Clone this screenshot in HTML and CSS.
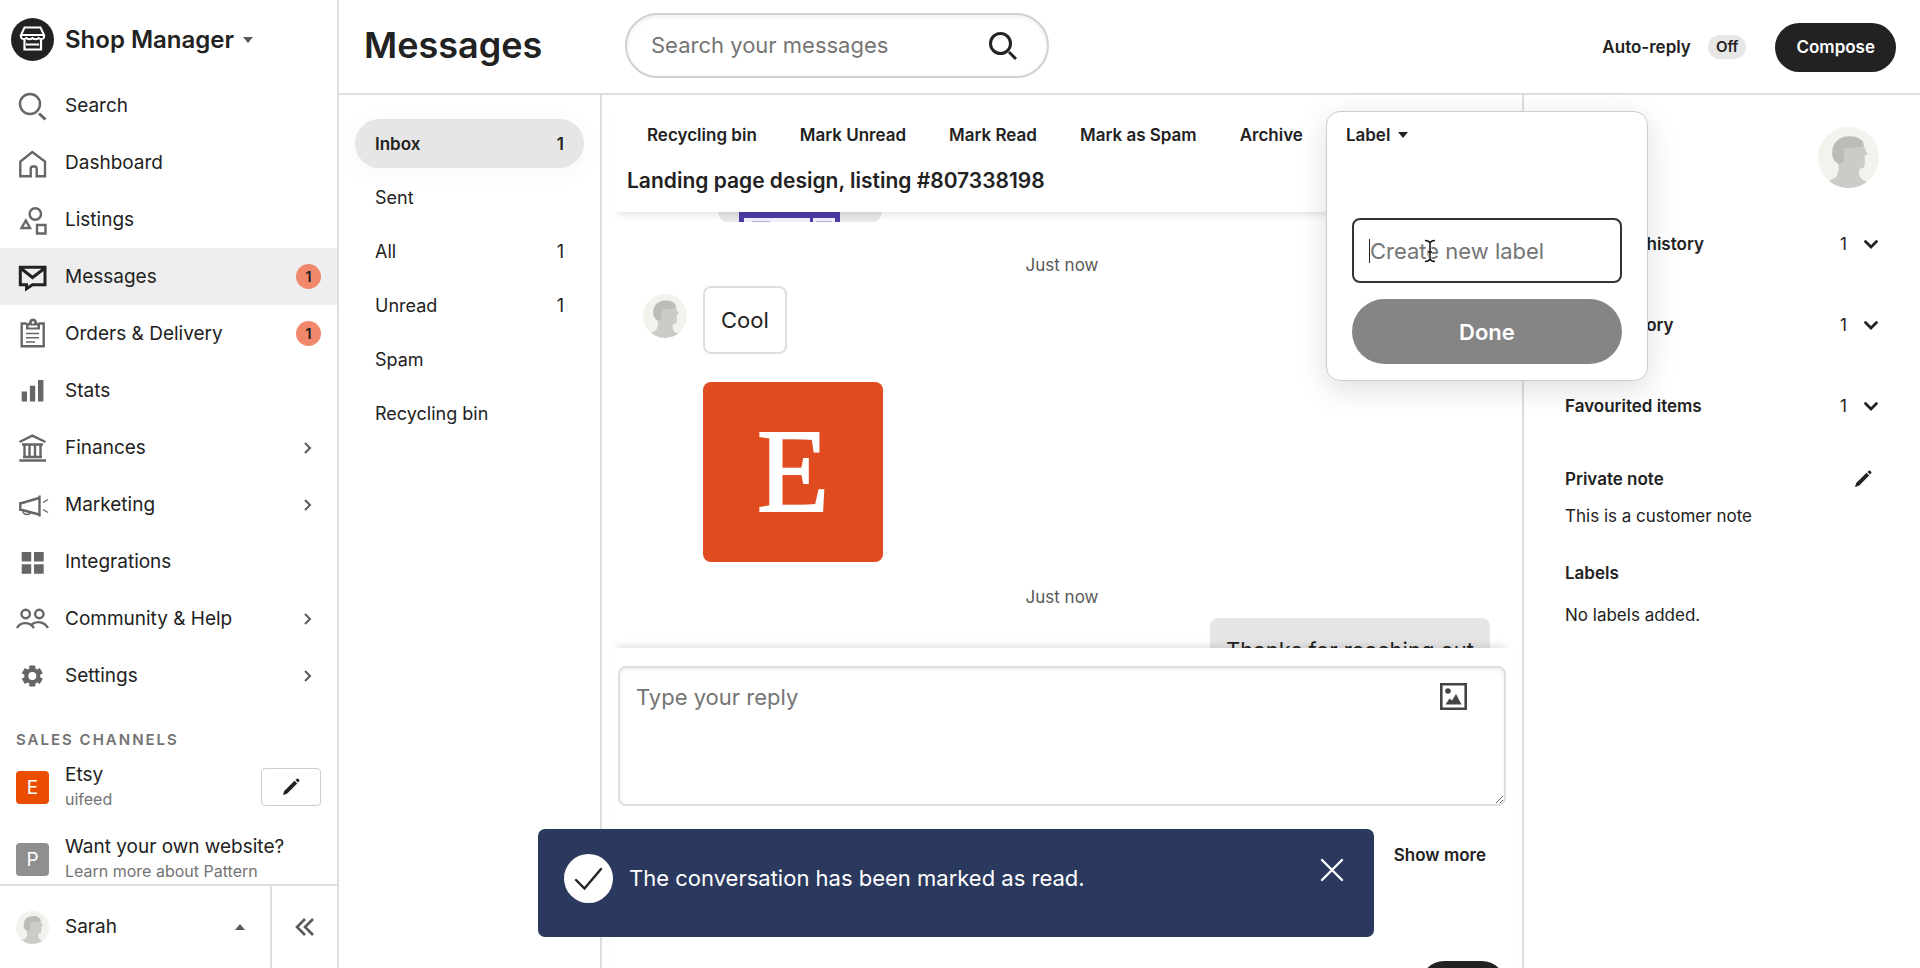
FILE: index.html
```html
<!DOCTYPE html>
<html lang="en">
<head>
<meta charset="utf-8">
<title>Shop Manager - Messages</title>
<link rel="stylesheet" href="styles.css">
</head>
<body>
<svg class="defs" aria-hidden="true">
  <symbol id="chev-right" viewBox="0 0 12 12"><path d="M3 1l5 5-5 5" fill="none" stroke="currentColor" stroke-width="2"/></symbol>
  <symbol id="chev-down" viewBox="0 0 16 16"><path d="M2.500 5.500L8 11l5.500-5.500" fill="none" stroke="currentColor" stroke-width="2.800" stroke-linecap="round"/></symbol>
  <symbol id="pencil" viewBox="0 0 18 18"><path d="M1 17l1.200-4L12.500 2.800l2.700 2.700L5 15.800zM13.500 1.900L14.800.700q.700-.500 1.400.100l1 1q.600.700 0 1.400L16 4.500z" fill="currentColor"/></symbol>
  <symbol id="avatar" viewBox="0 0 60 60">
    <circle cx="30" cy="30" r="30" fill="#f2f3ec"/>
    <path d="M20 38c1 6-1 10-3 12-2 1-4 2-6 3a30 30 0 0 0 37 1c-2-1-5-2-6-4-2-2-2-6-1-9 3 0 5-1 5-5v-8l3-1-3-6-2-8H22l-4 10z" fill="#cbccc7"/>
    <path d="M14 25c0-9 6-16 17-16 8 0 14 3 13 10l-6 1-12 1-1 13c-2 2-5 3-7 1-3-3-4-5-4-10z" fill="#bbbcb7"/>
  </symbol>
</svg>
<div class="app">
  <aside class="sidebar">
    <div class="side-scroll">
      <button class="brand" type="button">
        <svg class="brand-logo" viewBox="0 0 43 43"><circle cx="21.500" cy="21.500" r="21.500" fill="#222"/><path d="M13.500 9.500h16l3.500 7.500h-23z" fill="none" stroke="#fff" stroke-width="2"/><path d="M10 17v2.500q2 3 5.500.500q3 2.500 6 0q3 2.500 6 0q3.500 2.500 5.500-.500V17" fill="none" stroke="#fff" stroke-width="2"/><path d="M13.500 22v9.500h16.500V22M15 26.500h13" fill="none" stroke="#fff" stroke-width="2.200"/></svg>
        <span>Shop Manager</span><span class="tri-down grey"></span>
      </button>
      <nav class="nav">
        <a href="#"><svg viewBox="0 0 36 36"><circle cx="16" cy="16" r="10"/><path d="M25 25.500l6.500 6" stroke-width="3"/></svg><span>Search</span></a>
        <a href="#"><svg viewBox="0 0 36 36"><path d="M6.300 31.300V16.500l12-9.500 12.700 9.500v14.800h-8.300V24q0-2.500-2-2.500h-2q-2 0-2 2.500v7.300z"/></svg><span>Dashboard</span></a>
        <a href="#"><svg viewBox="0 0 36 36"><circle cx="21.300" cy="12" r="5.700"/><path d="M23 23h8.500v8.500H23zM11.800 18.500L7.500 26h8.500z"/></svg><span>Listings</span></a>
        <a href="#" class="active"><svg viewBox="0 0 36 36"><path d="M6.300 8.300H31v17.500H18.500l-6 4v-4H6.300zM6.500 9l12 9.500L31 9"/></svg><span>Messages</span><b class="badge">1</b></a>
        <a href="#"><svg viewBox="0 0 36 36"><path d="M12.500 7.500H7.700v22.700h22V7.500H25"/><path class="fill" fill-rule="evenodd" d="M12 13.500V7.500l3-1q.500-4 4-4t4 4l3 1v6zM19 5.200a1.300 1.300 0 1 0 0 2.600 1.300 1.300 0 0 0 0-2.600zM14.500 11.500h9v-2h-9z"/><path class="thin" d="M12 17.500h13M12 21.700h13M12 26h9"/></svg><span>Orders &amp; Delivery</span><b class="badge">1</b></a>
        <a href="#"><svg viewBox="0 0 36 36"><path class="fill" d="M7.700 18.500H13v10H7.700zM15.900 12.800h5.300v15.700h-5.300zM24 7h5.400v21.500H24z"/></svg><span>Stats</span></a>
        <a href="#"><svg viewBox="0 0 36 36"><path d="M5.500 12l12.800-6.300L31.500 12M8 14.500h21M9 27h19M5.300 30.500h26.700M10.500 14.500V27M15.500 14.500V27M21 14.500V27M26.500 14.500V27"/></svg><span>Finances</span><svg class="chev"><use href="#chev-right"/></svg></a>
        <a href="#"><svg viewBox="0 0 36 36"><path d="M25.500 8.500v21M25 11L6.300 16.500v6L25 27.500M6.300 15v9"/><path class="thin" d="M9 23.500q0 4 4 4 3 0 4-2.500M29 15.500l5-3M29 22.500l5 3"/></svg><span>Marketing</span><svg class="chev"><use href="#chev-right"/></svg></a>
        <a href="#"><svg viewBox="0 0 36 36"><path class="fill" d="M7.700 8h9.500v9.500H7.700zM20 8h9.700v9.500H20zM7.700 20.200h9.500v9.500H7.700zM20 20.200h9.700v9.500H20z"/></svg><span>Integrations</span></a>
        <a href="#"><svg viewBox="0 0 36 36"><circle cx="11.700" cy="13" r="4.200"/><circle cx="25.300" cy="13" r="4.200"/><path d="M3 27c3-6 12-7 17 0M17.500 23.500c5-4 13-3 16.500 3.500"/></svg><span>Community &amp; Help</span><svg class="chev"><use href="#chev-right"/></svg></a>
        <a href="#"><svg viewBox="0 0 36 36"><circle class="gear-ring" cx="18.300" cy="18" r="6"/><path class="gear-teeth" d="M18.300 7.500v4M18.300 24.500v4M9.300 12.700l3.400 2M23.900 21.300l3.400 2M9.300 23.300l3.400-2M23.900 14.700l3.400-2"/></svg><span>Settings</span><svg class="chev"><use href="#chev-right"/></svg></a>
      </nav>
      <h2 class="channels-title">Sales channels</h2>
      <div class="channel"><span class="tile etsy">E</span><div class="channel-text"><a href="#">Etsy</a><small>uifeed</small></div><button class="edit" type="button" aria-label="Edit shop"><svg><use href="#pencil"/></svg></button></div>
      <div class="channel"><span class="tile pattern">P</span><div class="channel-text"><a href="#">Want your own website?</a><small>Learn more about Pattern</small></div></div>
    </div>
    <div class="side-foot">
      <button class="user" type="button"><svg class="avatar-s"><use href="#avatar"/></svg><span>Sarah</span><span class="tri-up"></span></button>
      <button class="collapse" type="button" aria-label="Collapse"><svg viewBox="0 0 20 18"><path d="M10 1L2 9l8 8M18 1l-8 8 8 8" fill="none" stroke="#595959" stroke-width="2.600"/></svg></button>
    </div>
  </aside>
  <main class="main">
    <header class="top">
      <h1>Messages</h1>
      <label class="search"><input type="text" placeholder="Search your messages" aria-label="Search your messages"><svg viewBox="0 0 28 28"><circle cx="11.500" cy="11.500" r="10"/><path d="M20 20l7 7"/></svg></label>
      <div class="top-right"><span class="auto">Auto-reply</span><span class="off">Off</span><button class="compose" type="button">Compose</button></div>
    </header>
    <div class="body">
      <nav class="folders">
        <a href="#" class="current"><span>Inbox</span><span>1</span></a>
        <a href="#"><span>Sent</span></a>
        <a href="#"><span>All</span><span>1</span></a>
        <a href="#"><span>Unread</span><span>1</span></a>
        <a href="#"><span>Spam</span></a>
        <a href="#"><span>Recycling bin</span></a>
      </nav>
      <section class="conv">
        <div class="conv-head">
          <div class="tools">
            <button type="button">Recycling bin</button><button type="button">Mark Unread</button><button type="button">Mark Read</button><button type="button">Mark as Spam</button><button type="button">Archive</button>
            <div class="label-menu">
              <button type="button" class="label-btn">Label <span class="tri-down"></span></button>
              <form class="popup">
                <div class="field"><input type="text" placeholder="Create new label" aria-label="Create new label"><span class="caret"></span>
                <svg class="ibeam" viewBox="0 0 12 24"><path d="M1 1.500q4 0 5 2.500 1-2.500 5-2.500M6 4v16M1 22.500q4 0 5-2.500 1 2.500 5 2.500M4 13h4" fill="none" stroke="#fff" stroke-width="3"/><path d="M1 1.500q4 0 5 2.500 1-2.500 5-2.500M6 4v16M1 22.500q4 0 5-2.500 1 2.500 5 2.500M4 13h4" fill="none" stroke="#111" stroke-width="1.500"/></svg></div>
                <button type="button" class="done">Done</button>
              </form>
            </div>
          </div>
          <h2>Landing page design, listing #807338198</h2>
        </div>
        <div class="thread">
          <div class="clip"><svg viewBox="0 0 164 10"><path d="M0 0h164q-1 10-11 10H11Q1 10 0 0z" fill="#e8e8e8"/><path d="M21 0h101v10H21z" fill="#4f3ba6"/><path d="M26 6h66v4H26zM95 6h22v4H95z" fill="#f1effb"/><path d="M34 9h18v1H34zM98 9h16v1H98z" fill="#b5abdc"/></svg></div>
          <p class="time">Just now</p>
          <div class="incoming"><svg class="avatar-m"><use href="#avatar"/></svg><div class="bubble">Cool</div></div>
          <div class="picture">E</div>
          <p class="time">Just now</p>
          <div class="reply">Thanks for reaching out</div>
        </div>
        <div class="composer">
          <div class="box"><textarea placeholder="Type your reply" aria-label="Type your reply"></textarea><button type="button" class="attach" aria-label="Attach image"><svg viewBox="0 0 27 27"><path d="M1.300 1.300h24.400v24.400H1.300z" fill="none" stroke="#444" stroke-width="2.600"/><circle cx="8" cy="8" r="2.800" fill="#444"/><path d="M5.500 21.500l4-6 2.500 2 4-6.500 5.500 10.500z" fill="#444"/></svg></button></div>
          <button type="button" class="more">Show more</button>
          <button type="button" class="send" aria-label="Send"></button>
        </div>
      </section>
      <aside class="info">
        <svg class="avatar-l"><use href="#avatar"/></svg>
        <button type="button" class="fold"><b>Purchase history</b><span>1</span><svg><use href="#chev-down"/></svg></button>
        <button type="button" class="fold"><b>Order history</b><span>1</span><svg><use href="#chev-down"/></svg></button>
        <button type="button" class="fold"><b>Favourited items</b><span>1</span><svg><use href="#chev-down"/></svg></button>
        <div class="note-head"><h3>Private note</h3><button type="button" aria-label="Edit note"><svg><use href="#pencil"/></svg></button></div>
        <p class="note">This is a customer note</p>
        <h3>Labels</h3>
        <p class="labels">No labels added.</p>
      </aside>
    </div>
  </main>
  <div class="toast" role="status">
    <svg class="tick" viewBox="0 0 49 49"><circle cx="24.500" cy="24.500" r="24.500" fill="#fff"/><path d="M12 26l8.500 8.500L37 15" fill="none" stroke="#222" stroke-width="2.400" stroke-linecap="round"/></svg>
    <span>The conversation has been marked as read.</span>
    <button type="button" aria-label="Close"><svg viewBox="0 0 24 24"><path d="M2 2l20 20M22 2L2 22" fill="none" stroke="#fff" stroke-width="2.400" stroke-linecap="round"/></svg></button>
  </div>
</div>
</body>
</html>
```
FILE: styles.css
```css
* { box-sizing: border-box; }
body { margin: 0; font-family: Inter, "Liberation Sans", sans-serif; font-size: 19px; line-height: 24px; color: #222; background: #fff; }
button, input, textarea { font: inherit; color: inherit; }
button { border: 0; padding: 0; background: none; }
a { color: inherit; text-decoration: none; }
h1, h2, h3, p { margin: 0; }
.defs { display: none; }
.app { display: flex; height: 100vh; overflow: hidden; }

.sidebar { flex: 0 0 339px; display: flex; flex-direction: column; border-right: 2px solid #dedede; }
.side-scroll { flex: 1; min-height: 0; overflow: hidden; }
.brand { display: flex; align-items: center; height: 77px; padding: 2px 0 0 11px; font-size: 24px; font-weight: 600; }
.brand-logo { width: 43px; height: 43px; margin-right: 11px; }
.tri-down { display: inline-block; border: 5px solid transparent; border-top: 6px solid currentColor; border-bottom: 0; }
.tri-down.grey { margin-left: 9px; color: #595959; }
.nav a { display: flex; align-items: center; height: 57px; padding: 0 16px 0 14px; }
.nav svg { width: 36px; height: 36px; fill: none; stroke: #666; stroke-width: 2.4; }
.nav .thin { stroke-width: 1.4; }
.nav .fill { fill: #666; stroke: none; }
.nav .gear-ring { stroke-width: 4; }
.nav .gear-teeth { stroke-width: 6; }
.nav span { flex: 1; margin-left: 15px; }
.nav .active { background: #eee; }
.nav .active svg { stroke: #222; stroke-width: 3; }
.nav .chev { width: 12px; height: 12px; margin-right: 7px; color: #595959; }
.badge { width: 25px; height: 25px; border-radius: 50%; background: #f1886b; font-size: 15px; font-weight: 600; line-height: 25px; text-align: center; }
.channels-title { padding: 24px 16px 11px; font-size: 15px; font-weight: 600; letter-spacing: 2px; color: #737373; text-transform: uppercase; }
.channel { display: flex; align-items: center; padding: 0 16px; height: 48px; margin-bottom: 24px; }
.tile { width: 33px; height: 33px; border-radius: 4px; color: #fff; text-align: center; line-height: 33px; }
.etsy { background: #eb4d00; }
.pattern { background: #8f8f8f; }
.channel-text { flex: 1; display: grid; margin-left: 16px; }
.channel small { font-size: 16px; color: #737373; }
.edit { width: 60px; height: 38px; border: 1px solid #ccc; border-radius: 4px; display: grid; place-items: center; }
.edit svg, .note-head svg { width: 18px; height: 18px; }
.side-foot { flex: 0 0 84px; display: flex; border-top: 2px solid #dedede; }
.user { flex: 1; display: flex; align-items: center; padding: 0 25px 0 16px; text-align: left; }
.user span:nth-child(2) { flex: 1; margin-left: 16px; }
.avatar-s { width: 33px; height: 33px; }
.tri-up { border: 5px solid transparent; border-bottom: 6px solid #595959; border-top: 0; }
.collapse { width: 67px; border-left: 2px solid #dedede; display: grid; place-items: center; }
.collapse svg { width: 20px; height: 18px; }

.main { flex: 1; min-width: 0; display: flex; flex-direction: column; }
.top { flex: 0 0 95px; display: flex; align-items: center; padding: 0 24px 3px 25px; border-bottom: 2px solid #dedede; }
.top h1 { width: 261px; font-size: 36px; line-height: 44px; font-weight: 600; }
.search { position: relative; width: 424px; }
.search input { width: 100%; height: 65px; padding: 0 24px; border: 2px solid #d0d0d0; border-radius: 33px; box-shadow: inset 0 2px 4px #0001; font-size: 22px; outline: 0; }
::placeholder { color: #757575; opacity: 1; }
.search svg { position: absolute; right: 32px; top: 19px; width: 28px; height: 28px; fill: none; stroke: #222; stroke-width: 3; }
.top-right { margin-left: auto; display: flex; align-items: center; padding-top: 4px; font-size: 17px; font-weight: 600; }
.off { margin: 0 29px 0 17px; padding: 0 8px; border-radius: 12px; background: #e6e6e6; font-size: 15px; }
.compose { height: 49px; padding: 0 21px; border-radius: 25px; background: #222; color: #fff; }
.body { flex: 1; min-height: 0; display: flex; }

.folders { flex: 0 0 263px; padding: 24px 16px 0; border-right: 2px solid #dedede; font-size: 18px; }
.folders a { display: flex; justify-content: space-between; align-items: center; height: 49px; margin-bottom: 5px; padding: 0 20px; border-radius: 25px; }
.folders .current { background: #e6e6e6; font-size: 17px; font-weight: 600; box-shadow: 0 4px 24px #0000000a; }

.conv { flex: 1; min-width: 0; border-right: 2px solid #dedede; }
.conv-head { position: relative; z-index: 1; height: 117px; margin: 0 10px; padding: 0 15px; background: #fff; box-shadow: 0 8px 8px -6px #0002; }
.tools { display: flex; gap: 43px; padding: 28px 0 20px 20px; font-size: 17px; font-weight: 600; }
.tools button { white-space: nowrap; }
.conv-head h2 { font-size: 21px; font-weight: 600; line-height: 28px; }
.label-menu { position: relative; }
.label-btn { position: relative; z-index: 2; display: flex; align-items: center; gap: 8px; }
.popup { position: absolute; z-index: 1; top: -12px; left: -20px; width: 322px; height: 270px; padding: 106px 25px 18px; border: 1px solid #ccc; border-radius: 14px; background: #fff; box-shadow: 0 8px 30px #0002; }
.field { position: relative; }
.popup input { width: 100%; height: 65px; padding: 0 16px; border: 2px solid #333; border-radius: 8px; font-size: 22px; font-weight: 400; outline: 0; }
.caret { position: absolute; left: 17px; top: 21px; width: 1px; height: 24px; background: #222; }
.ibeam { position: absolute; left: 72px; top: 21px; width: 12px; height: 24px; }
.done { width: 100%; height: 65px; margin-top: 16px; border-radius: 33px; background: #858585; color: #fff; font-size: 22px; }

.thread { height: 45vh; overflow: hidden; padding: 0 32px; }
.clip svg { display: block; width: 164px; height: 10px; margin-left: 84px; }
.time { padding: 31px 0 9px; text-align: center; font-size: 17px; color: #595959; }
.incoming { display: flex; gap: 16px; margin-left: 9px; }
.avatar-m { width: 44px; height: 44px; margin-top: 8px; }
.bubble { padding: 20px 16px; border: 2px solid #dedede; border-radius: 8px; font-size: 22px; }
.picture { width: 180px; height: 180px; margin: 28px 0 -8px 69px; border-radius: 8px; background: #e04b20; color: #fff; font: 118px/180px "Liberation Serif", serif; -webkit-text-stroke: 2px #fff; text-align: center; }
.reply { width: max-content; margin-left: auto; padding: 20px 16px; border-radius: 8px; background: #e6e6e6; font-size: 22px; }
.composer { position: relative; display: flex; flex-direction: column; align-items: flex-end; margin: 0 10px; padding: 18px 6px 0; background: #fff; box-shadow: 0 -8px 8px -6px #0002; }
.box { position: relative; width: 100%; height: 140px; }
.box textarea { width: 100%; height: 100%; padding: 15px 16px; border: 2px solid #dedede; border-radius: 8px; font-size: 22px; line-height: 28px; outline: 0; box-shadow: inset 0 2px 4px #0001; }
.attach { position: absolute; right: 39px; top: 17px; }
.attach svg { display: block; width: 27px; height: 27px; }
.more { margin: 37px 20px 94px 0; font-size: 17px; font-weight: 600; }
.send { width: 86px; height: 49px; border-radius: 25px; background: #222; }

.info { flex: 0 0 396px; display: flex; flex-direction: column; padding: 32px 41px 0; font-size: 17px; }
.avatar-l { align-self: flex-end; width: 61px; height: 61px; margin-bottom: 44px; }
.fold { display: flex; align-items: center; margin-bottom: 57px; text-align: left; }
.fold b { flex: 1; font-weight: 600; }
.fold svg { width: 16px; height: 16px; margin-left: 16px; }
.info h3 { font-size: 17px; font-weight: 600; }
.note-head { display: flex; align-items: center; justify-content: space-between; margin-top: -8px; padding-right: 7px; }
.note-head svg { display: block; }
.note { margin: 13px 0 33px; }
.labels { margin-top: 18px; }

.toast { position: fixed; z-index: 5; left: 538px; bottom: 31px; width: 836px; height: 108px; display: flex; align-items: center; padding: 0 30px 10px 26px; border-radius: 7px; background: #2b395e; color: #fff; font-size: 22px; }
.toast span { flex: 1; margin-left: 16px; }
.tick { width: 49px; height: 49px; }
.toast button svg { display: block; width: 24px; height: 24px; margin-bottom: 16px; }
```
